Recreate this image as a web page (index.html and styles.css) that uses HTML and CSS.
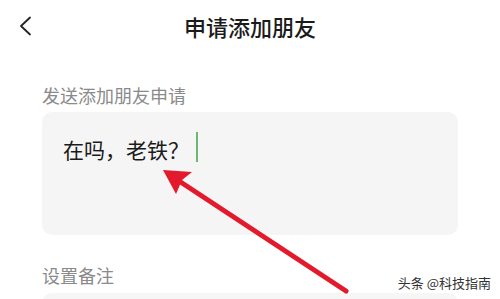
FILE: index.html
```html
<!DOCTYPE html>
<html lang="zh-CN">
<head>
<meta charset="utf-8">
<title>申请添加朋友</title>
<link rel="stylesheet" href="styles.css">
</head>
<body>
<div class="screen">
  <header class="topbar">
    <div class="back">
      <svg width="14" height="20" viewBox="0 0 14 20"><path d="M12 1.5 L3 10 L12 18.5" fill="none" stroke="#222" stroke-width="1.8" stroke-linecap="round" stroke-linejoin="round"/></svg>
    </div>
    <h1 class="title">申请添加朋友</h1>
    <div></div>
  </header>
  <main class="content">
    <div class="label">发送添加朋友申请</div>
    <div class="field">
      <span class="msg">在吗，老铁？</span><span class="cursor"></span>
    </div>
    <div class="label label2">设置备注</div>
    <div class="field2"></div>
  </main>
  <svg class="arrow" width="500" height="299" viewBox="0 0 500 299">
    <line x1="346" y1="291" x2="176" y2="179" stroke="#e21a2c" stroke-width="5" stroke-linecap="round"/>
    <polygon points="163,170 192,172 182,180 176,194" fill="#e21a2c"/>
  </svg>
  <div class="watermark">头条 @科技指南</div>
</div>
</body>
</html>
```
FILE: styles.css
```css
html, body {
  margin: 0;
  padding: 0;
  background: #ffffff;
}
body {
  font-family: "Noto Sans CJK SC", "Noto Sans", sans-serif;
}
.screen {
  position: relative;
  width: 500px;
  height: 299px;
  overflow: hidden;
  background: #ffffff;
}
.topbar {
  display: grid;
  grid-template-columns: 1fr auto 1fr;
  align-items: center;
  height: 52px;
}
.back {
  padding-left: 18px;
  display: flex;
  align-items: center;
  padding-top: 0px;
}
.back svg {
  display: block;
}
.title {
  margin: 0;
  font-size: 22px;
  font-weight: 500;
  color: #1b1b1b;
  line-height: 30px;
}
.content {
  padding: 0 42px;
  display: flex;
  flex-direction: column;
}
.label {
  margin-top: 31px;
  font-size: 18px;
  line-height: 24px;
  color: #8a8a8a;
}
.field {
  margin-top: 5px;
  height: 123px;
  box-sizing: border-box;
  background: #f5f5f5;
  border-radius: 10px;
  padding: 22px 21px 0;
  display: flex;
  align-items: flex-start;
}
.msg {
  font-size: 21px;
  line-height: 30px;
  color: #1a1a1a;
}
.cursor {
  display: inline-block;
  width: 2px;
  height: 30px;
  margin-left: 7px;
  margin-top: -2px;
  background: #6fb76f;
}
.label2 {
  margin-top: 28px;
}
.field2 {
  margin-top: 6px;
  height: 40px;
  background: #f6f6f6;
  border-radius: 10px;
}
.arrow {
  position: absolute;
  left: 0;
  top: 0;
}
.watermark {
  position: absolute;
  right: 9px;
  bottom: 8px;
  font-size: 13px;
  line-height: 16px;
  color: #333333;
  text-shadow: 0 0 2px #ffffff, 0 0 2px #ffffff;
}
```
